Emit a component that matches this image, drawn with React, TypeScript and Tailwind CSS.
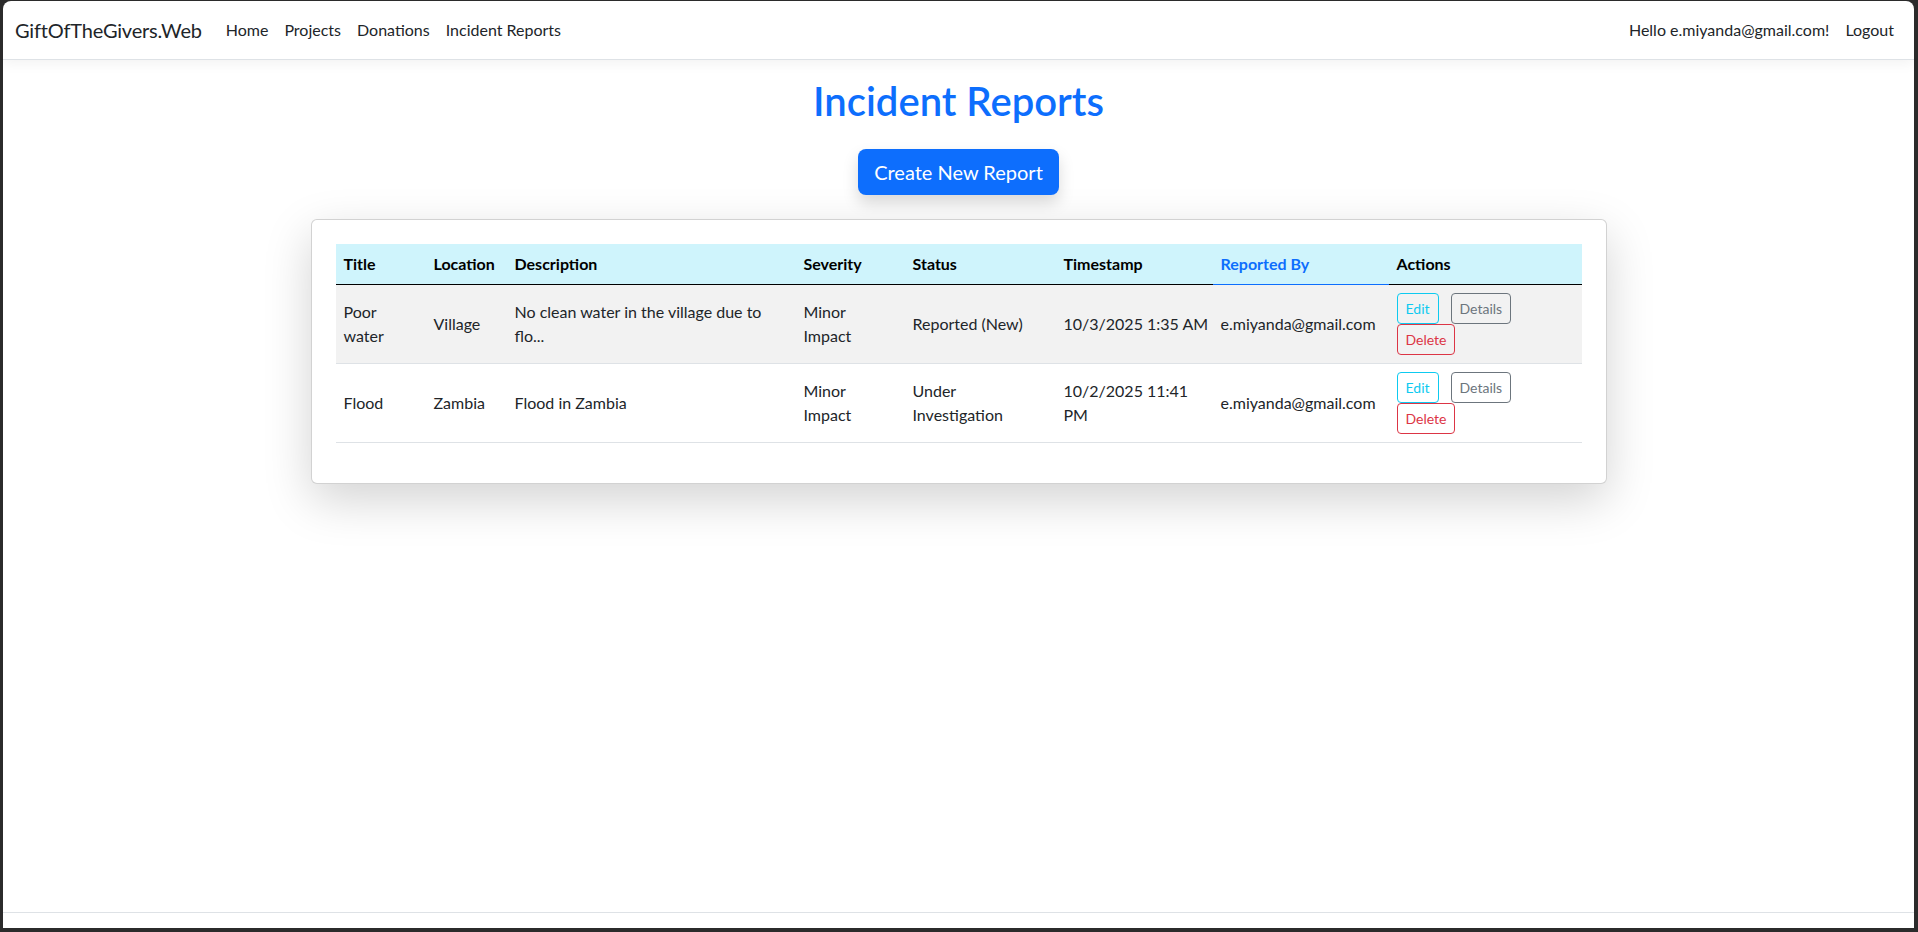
type Report = {
  title: string
  location: string
  description: string
  severity: string
  status: string
  timestamp: string[]
  reportedBy: string
}

const reports: Report[] = [
  {
    title: 'Poor water',
    location: 'Village',
    description: 'No clean water in the village due to flo...',
    severity: 'Minor Impact',
    status: 'Reported (New)',
    timestamp: ['10/3/2025 1:35 AM'],
    reportedBy: 'e.miyanda@gmail.com',
  },
  {
    title: 'Flood',
    location: 'Zambia',
    description: 'Flood in Zambia',
    severity: 'Minor Impact',
    status: 'Under Investigation',
    timestamp: ['10/2/2025 11:41', 'PM'],
    reportedBy: 'e.miyanda@gmail.com',
  },
]

const font = { fontFamily: 'Lato, "Noto Sans", sans-serif' }

function Navbar() {
  return (
    <nav className="flex h-[59px] shrink-0 items-center justify-between border-b border-[#dee2e6] px-3 shadow-[0_4px_12px_rgba(0,0,0,0.05)]">
      <div className="flex items-center">
        <a className="mr-4 py-[5px] text-[20px] leading-[30px] tracking-[-0.2px] text-[#212529]">GiftOfTheGivers.Web</a>
        <ul className="flex items-center text-[16px] leading-6 text-[#212529]">
          <li className="px-2 py-2">Home</li>
          <li className="px-2 py-2">Projects</li>
          <li className="px-2 py-2">Donations</li>
          <li className="px-2 py-2">Incident Reports</li>
        </ul>
      </div>
      <ul className="flex items-center text-[16px] leading-6 text-[#212529]">
        <li className="px-2 py-2">Hello e.miyanda@gmail.com!</li>
        <li className="px-2 py-2">Logout</li>
      </ul>
    </nav>
  )
}

function ActionButtons() {
  const base = 'rounded-[4px] border px-2 py-1 text-[14px] leading-[21px] bg-transparent'
  return (
    <div className="flex flex-col">
      <div className="flex gap-3">
        <button className={`${base} border-[#0dcaf0] text-[#0dcaf0]`}>Edit</button>
        <button className={`${base} border-[#6c757d] text-[#6c757d]`}>Details</button>
      </div>
      <div className="flex">
        <button className={`${base} border-[#dc3545] text-[#dc3545]`}>Delete</button>
      </div>
    </div>
  )
}

function ReportsTable() {
  const th = 'px-2 py-2 text-left align-bottom font-bold border-b border-black text-black'
  const td = 'px-2 py-2 align-middle'
  return (
    <table className="mb-4 w-full table-fixed border-collapse text-[16px] leading-6 text-[#212529]">
      <colgroup>
        <col className="w-[90px]" />
        <col className="w-[81px]" />
        <col className="w-[289px]" />
        <col className="w-[109px]" />
        <col className="w-[151px]" />
        <col className="w-[157px]" />
        <col className="w-[176px]" />
        <col className="w-[193px]" />
      </colgroup>
      <thead className="bg-[#cff4fc]">
        <tr>
          <th className={th}>Title</th>
          <th className={th}>Location</th>
          <th className={th}>Description</th>
          <th className={th}>Severity</th>
          <th className={th}>Status</th>
          <th className={th}>Timestamp</th>
          <th className="border-b border-[#0d6efd] px-2 py-2 text-left align-bottom font-bold text-[#0d6efd]">Reported By</th>
          <th className={th}>Actions</th>
        </tr>
      </thead>
      <tbody>
        {reports.map((r, i) => (
          <tr key={r.title} className={`border-b border-[#dee2e6] ${i % 2 === 0 ? 'bg-[#f2f2f2]' : 'bg-white'}`}>
            <td className={td}>{r.title}</td>
            <td className={td}>{r.location}</td>
            <td className={td}>{r.description}</td>
            <td className={td}>{r.severity}</td>
            <td className={td}>{r.status}</td>
            <td className={`${td} whitespace-nowrap`}>
              {r.timestamp.map((line) => (
                <div key={line}>{line}</div>
              ))}
            </td>
            <td className={td}>{r.reportedBy}</td>
            <td className={td}>
              <ActionButtons />
            </td>
          </tr>
        ))}
      </tbody>
    </table>
  )
}

export default function App() {
  return (
    <div className="flex h-screen w-full bg-[#2b2b2b] pb-[4px] pl-[3px] pr-[4px] pt-[1px]" style={font}>
      <div className="flex flex-1 flex-col overflow-hidden rounded-t-lg bg-white">
        <Navbar />
        <main className="mx-auto mt-[17px] w-full max-w-[1320px] px-3">
          <h1 className="mb-6 text-center text-[40px] font-semibold leading-[48px] text-[#0d6efd]">Incident Reports</h1>
          <div className="flex justify-center">
            <button className="rounded-lg bg-[#0d6efd] px-4 py-2 text-[20px] leading-[30px] text-white shadow-[0_8px_16px_rgba(0,0,0,0.15)]">
              Create New Report
            </button>
          </div>
          <div className="mt-6 rounded-[6px] border border-black/[0.175] bg-white p-6 shadow-[0_16px_48px_rgba(0,0,0,0.175)]">
            <ReportsTable />
          </div>
        </main>
        <footer className="mt-auto h-[16px] border-t border-[#dee2e6]" />
      </div>
    </div>
  )
}
